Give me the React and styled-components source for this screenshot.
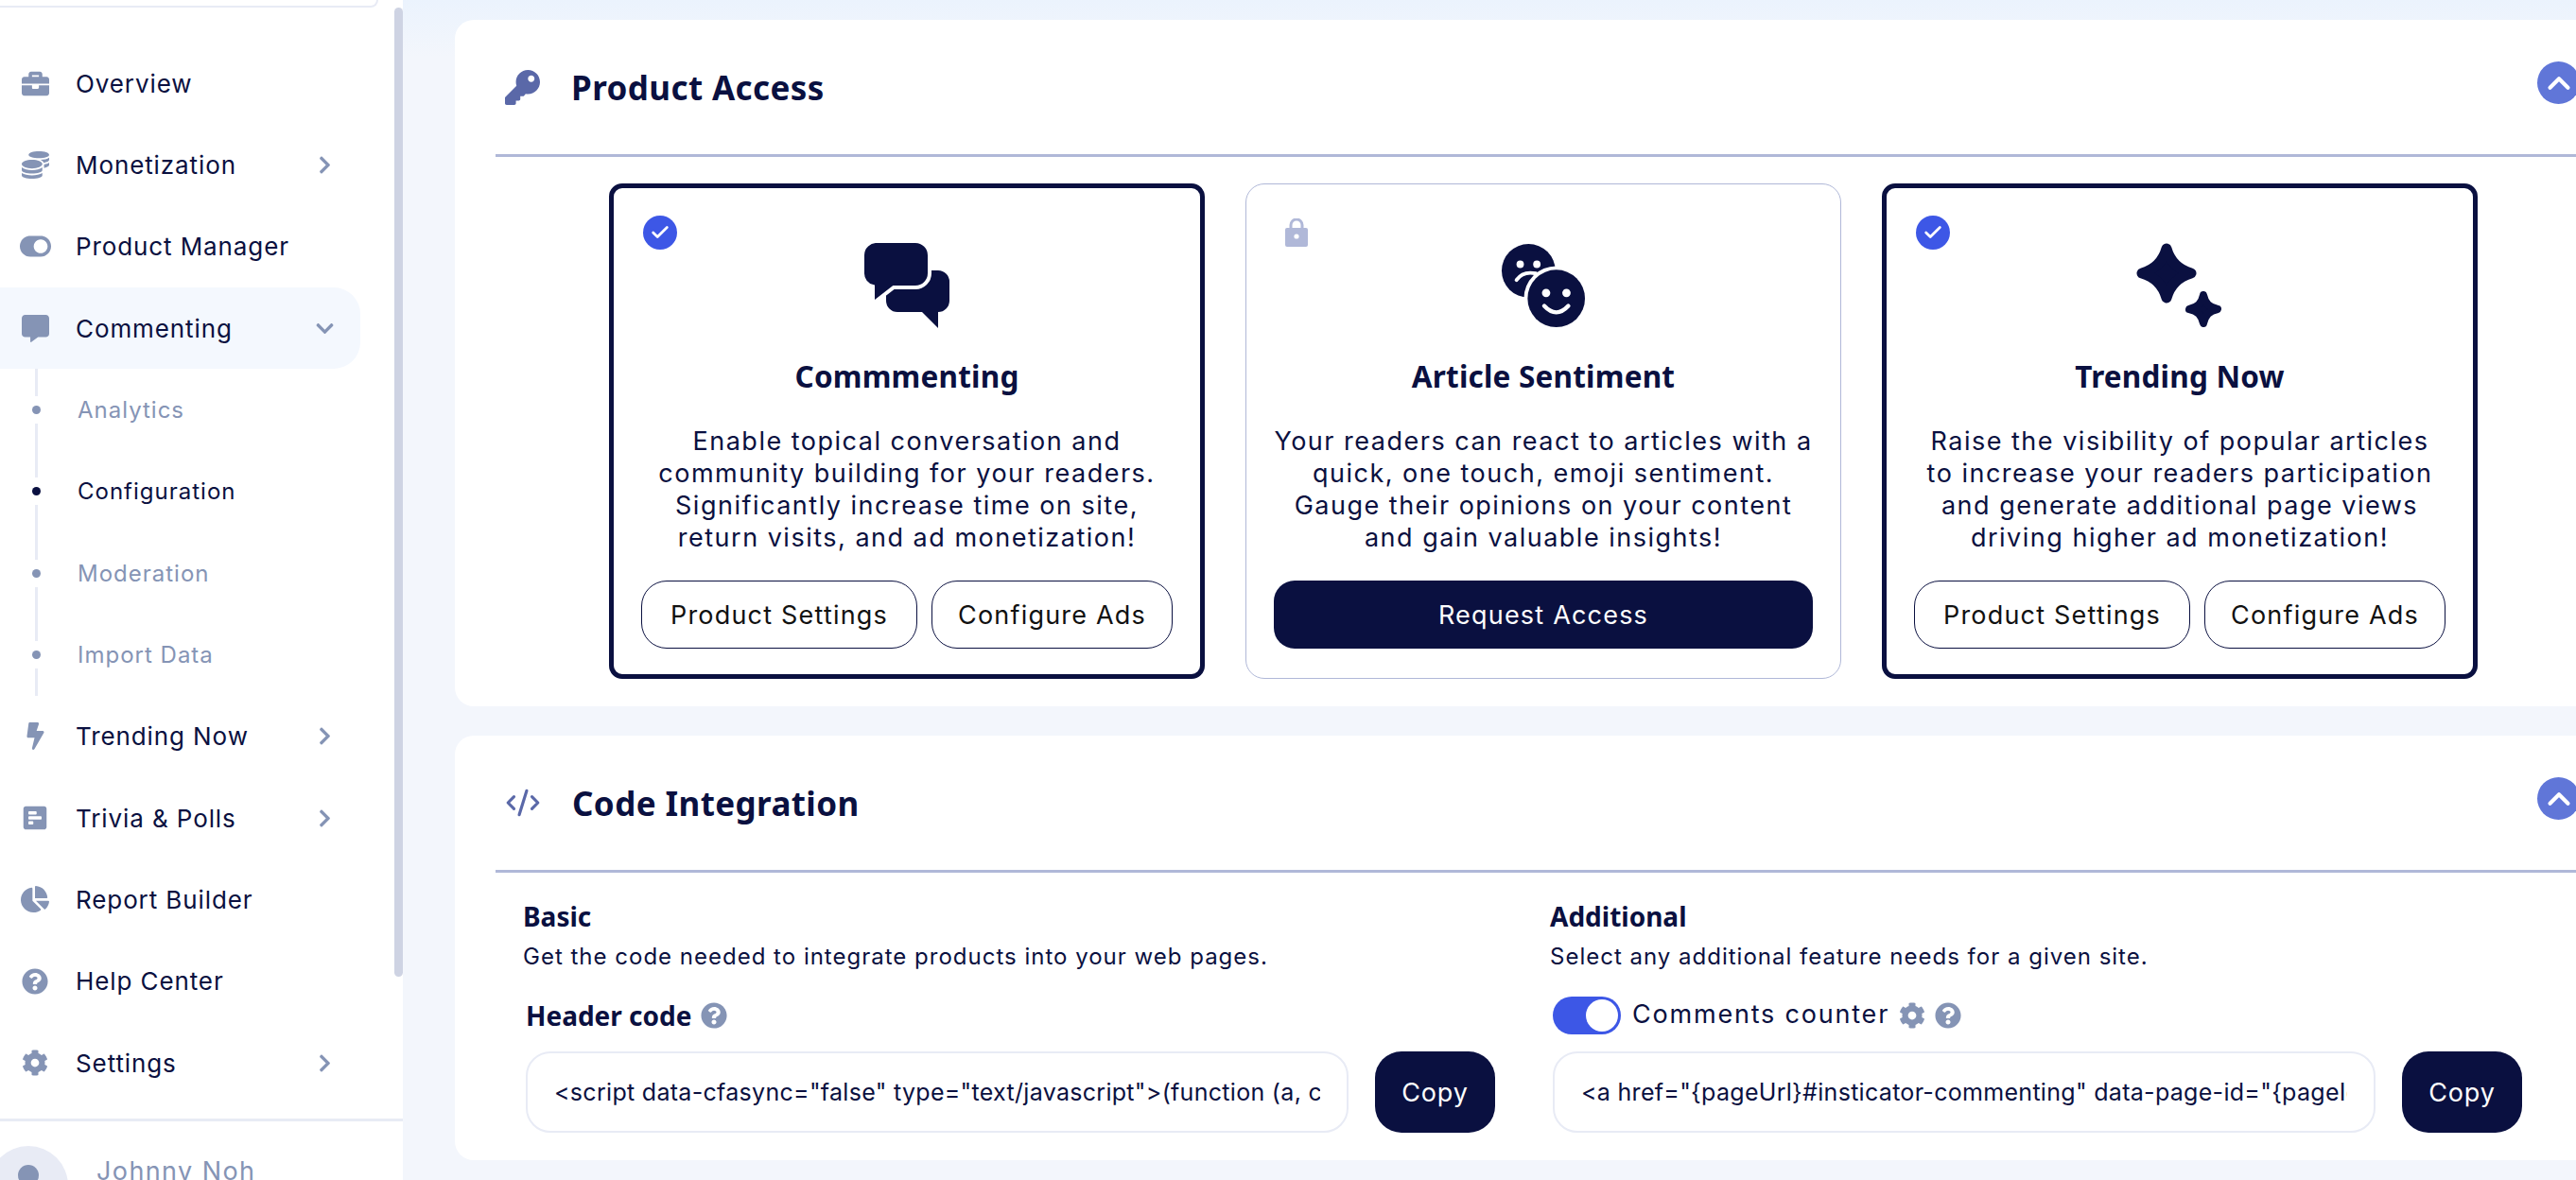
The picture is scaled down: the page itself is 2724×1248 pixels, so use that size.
import React from "react";
import styled, { createGlobalStyle } from "styled-components";
import {
  FaBolt,
  FaBriefcase,
  FaChartPie,
  FaChevronDown,
  FaChevronRight,
  FaCoins,
  FaCog,
  FaCommentAlt,
  FaKey,
  FaPollH,
  FaQuestionCircle,
  FaToggleOn,
} from "react-icons/fa";
import { Check, ChevronUp, CodeXml } from "lucide-react";

const NAVY = "#0a1040";
const SLATE = "#8594b5";
const BLUE = "#3d57e6";
const LINE = "#b0b8d8";
const PALE = "#e8ebf5";
const BODY_FONT = '"Inter", "Liberation Sans", sans-serif';
const HEAD_FONT = '"Noto Sans", "Liberation Sans", sans-serif';

const GlobalStyle = createGlobalStyle`
  html, body {
    margin: 0;
    padding: 0;
    overflow: hidden;
    background: #f3f6fc;
  }
  * {
    box-sizing: border-box;
  }
`;

const Page = styled.div`
  display: flex;
  width: 2724px;
  height: 1248px;
  overflow: hidden;
  font-family: ${BODY_FONT};
  color: ${NAVY};
`;

const Sidebar = styled.aside`
  position: relative;
  flex: 0 0 426px;
  height: 100%;
  overflow: hidden;
  background: #fff;
`;

const Scrollbar = styled.div`
  position: absolute;
  top: 8px;
  right: 0;
  width: 9px;
  height: 1025px;
  border-radius: 5px;
  background: #ced3e3;
`;

const LogoEdge = styled.div`
  width: 400px;
  height: 8px;
  border-bottom: 2px solid ${PALE};
  border-right: 2px solid ${PALE};
  border-bottom-right-radius: 26px;
`;

const Menu = styled.nav`
  display: flex;
  flex-direction: column;
  padding-top: 37px;
`;

const MenuRow = styled.div`
  display: flex;
  align-items: center;
  width: 381px;
  height: 86.33px;
  padding: 0 27px 0 20px;
  border-radius: 0 28px 28px 0;
  background: ${(p) => (p.$active ? "#f4f8fe" : "transparent")};
`;

const MenuIcon = styled.span`
  display: flex;
  justify-content: center;
  flex: 0 0 34px;
  margin-right: 26px;
  color: ${SLATE};
  font-size: ${(p) => p.$size || 29}px;
`;

const MenuLabel = styled.span`
  font-size: 26px;
  font-weight: 430;
  letter-spacing: 0.9px;
  white-space: nowrap;
`;

const MenuArrow = styled.span`
  display: flex;
  margin-left: auto;
  color: ${SLATE};
  font-size: 21px;
`;

const SubRow = styled.div`
  display: flex;
  align-items: center;
  height: 86.33px;
  padding-left: 34px;
`;

const Rail = styled.div`
  display: flex;
  flex-direction: column;
  align-items: center;
  flex: 0 0 9px;
  height: 100%;
  margin-right: 39px;

  &::before,
  &::after {
    content: "";
    flex: 1;
    width: 3px;
    background: ${PALE};
  }
`;

const RailDot = styled.span`
  width: 9px;
  height: 9px;
  margin: 10px 0;
  border-radius: 50%;
  background: ${(p) => (p.$current ? NAVY : SLATE)};
`;

const SubLabel = styled.span`
  font-size: 24px;
  letter-spacing: 1px;
  color: ${(p) => (p.$current ? NAVY : SLATE)};
`;

const SidebarFooter = styled.div`
  display: flex;
  gap: 30px;
  margin-top: 16px;
  margin-left: -12px;
  padding-top: 26px;
  border-top: 3px solid ${PALE};
  width: 438px;
`;

const FooterAvatar = styled.div`
  display: flex;
  justify-content: center;
  flex: 0 0 84px;
  height: 84px;
  padding-top: 20px;
  border-radius: 50%;
  background: ${PALE};

  &::before {
    content: "";
    width: 22px;
    height: 22px;
    border-radius: 50%;
    background: ${SLATE};
  }
`;

const FooterName = styled.span`
  margin-top: 10px;
  font-size: 27px;
  letter-spacing: 1.4px;
  color: ${SLATE};
`;

const Main = styled.main`
  display: flex;
  flex-direction: column;
  flex: 1;
  gap: 31px;
  min-width: 0;
  padding: 21px 0 0 55px;
  overflow: hidden;
  background: linear-gradient(180deg, #ebf3fd 0, #f3f6fc 60px);
`;

const Section = styled.section`
  flex: none;
  width: 2302px;
  padding: 0 43px;
  border-radius: 20px;
  background: #fff;
`;

const SectionHeader = styled.header`
  display: flex;
  align-items: center;
  height: 145px;
  padding: 0 12px 0 10px;
  border-bottom: 3px solid ${LINE};
`;

const SectionIcon = styled.span`
  display: flex;
  justify-content: center;
  flex: 0 0 36px;
  margin-right: 33px;
  color: #5a68a8;
  font-size: 37px;
`;

const SectionTitle = styled.h2`
  margin: 0;
  font-family: ${HEAD_FONT};
  font-size: 35px;
  font-weight: 700;
  letter-spacing: 0.4px;
`;

const CollapseButton = styled.span`
  display: flex;
  align-items: center;
  justify-content: center;
  width: 45px;
  height: 45px;
  margin-left: auto;
  margin-bottom: 9px;
  border-radius: 50%;
  background: #6076d8;
  color: #fff;
`;

const ProductRow = styled.div`
  display: flex;
  justify-content: center;
  gap: 43px;
  padding: 28px 0 29px;
`;

const ProductCard = styled.article`
  position: relative;
  display: flex;
  flex-direction: column;
  align-items: center;
  width: 630px;
  height: 524px;
  padding-top: ${(p) => (p.$selected ? 58 : 62)}px;
  border: ${(p) => (p.$selected ? `5px solid ${NAVY}` : `1px solid ${LINE}`)};
  border-radius: ${(p) => (p.$selected ? 14 : 20)}px;
`;

const CheckBadge = styled.span`
  position: absolute;
  top: 29px;
  left: 31px;
  display: flex;
  align-items: center;
  justify-content: center;
  width: 36px;
  height: 36px;
  border-radius: 50%;
  background: ${BLUE};
  color: #fff;
`;

const LockBadge = styled.svg`
  position: absolute;
  top: 36px;
  left: 41px;
  width: 24px;
  height: 30px;
  color: ${LINE};
`;

const ProductIcon = styled.svg`
  display: block;
  width: 92px;
  height: 90px;
  color: ${NAVY};
`;

const ProductTitle = styled.h3`
  margin: 31px 0 32px;
  font-family: ${HEAD_FONT};
  font-size: 31.5px;
  font-weight: 700;
  letter-spacing: 0.2px;
  line-height: 40px;
`;

const ProductText = styled.p`
  margin: 0;
  font-size: 27px;
  letter-spacing: 1.5px;
  line-height: 34px;
  text-align: center;
  white-space: nowrap;
`;

const ButtonRow = styled.div`
  display: flex;
  justify-content: center;
  gap: 15px;
  margin-top: 28px;
`;

const OutlineButton = styled.button`
  width: ${(p) => p.$width}px;
  height: 72px;
  padding: 0;
  border: 1px solid ${NAVY};
  border-radius: 27px;
  background: #fff;
  color: #111;
  font-family: ${BODY_FONT};
  font-size: 27px;
  letter-spacing: 1.2px;
`;

const SolidButton = styled.button`
  width: 570px;
  height: 72px;
  margin-top: 28px;
  border: 0;
  border-radius: 22px;
  background: ${NAVY};
  color: #fff;
  font-family: ${BODY_FONT};
  font-size: 27px;
  letter-spacing: 1.2px;
`;

const CodeColumns = styled.div`
  display: grid;
  grid-template-columns: 1086px 1fr;
  padding: 31px 0 29px 29px;
`;

const CodeColumn = styled.div`
  display: flex;
  flex-direction: column;
`;

const ColumnTitle = styled.h4`
  margin: 0;
  font-family: ${HEAD_FONT};
  font-size: 28px;
  font-weight: 700;
  line-height: 30px;
`;

const ColumnText = styled.p`
  margin: 13px 0 0;
  font-size: 24px;
  letter-spacing: 1px;
  line-height: 30px;
`;

const FieldLabelRow = styled.div`
  display: flex;
  align-items: center;
  gap: 10px;
  height: 40px;
  margin-top: 27px;
  padding-left: 3px;
`;

const FieldLabel = styled.span`
  font-family: ${HEAD_FONT};
  font-size: 28px;
  font-weight: 700;
`;

const CounterLabel = styled.span`
  margin: 0 0 3px 2px;
  font-size: 27px;
  letter-spacing: 1.8px;
`;

const SmallIcon = styled.span`
  display: flex;
  font-size: 28px;
  color: ${SLATE};
`;

const Toggle = styled.span`
  display: flex;
  justify-content: flex-end;
  width: 72px;
  height: 40px;
  padding: 3px;
  border-radius: 20px;
  background: ${BLUE};

  &::after {
    content: "";
    width: 34px;
    height: 34px;
    border-radius: 50%;
    background: #fff;
  }
`;

const CodeRow = styled.div`
  display: flex;
  gap: 28px;
  margin-top: 18px;
  padding-left: 3px;
`;

const CodeInput = styled.input`
  width: 870px;
  height: 86px;
  padding: 0 28px;
  border: 2px solid ${PALE};
  border-radius: 26px;
  background: #fff;
  color: ${NAVY};
  font-family: ${BODY_FONT};
  font-size: 25px;
  letter-spacing: 0.3px;
  outline: none;
`;

const CopyButton = styled.button`
  width: 127px;
  height: 86px;
  border: 0;
  border-radius: 28px;
  background: ${NAVY};
  color: #fff;
  font-family: ${BODY_FONT};
  font-size: 27px;
  letter-spacing: 0.8px;
`;

const BubblesIcon = () => (
  <ProductIcon viewBox="0 0 92 90">
    <path
      fill="currentColor"
      d="M36 29h43a12 12 0 0 1 12 12v20a12 12 0 0 1-12 12v17L62 73H36a12 12 0 0 1-12-12V41a12 12 0 0 1 12-12z"
    />
    <path
      fill="currentColor"
      stroke="#fff"
      strokeWidth="4"
      d="M15 -2h40a15 15 0 0 1 15 15v19a15 15 0 0 1-15 15H32L10 64V46A14 14 0 0 1-1 32V13A15 15 0 0 1 15-2z"
    />
  </ProductIcon>
);

const FacesIcon = () => (
  <ProductIcon viewBox="0 0 92 92">
    <circle cx="30" cy="30" r="29" fill="currentColor" />
    <circle cx="21" cy="23" r="4" fill="#fff" />
    <circle cx="39" cy="23" r="4" fill="#fff" />
    <path d="M17 40Q24 30 38 33" fill="none" stroke="#fff" strokeWidth="4" strokeLinecap="round" />
    <circle cx="60" cy="60" r="35" fill="#fff" />
    <circle cx="60" cy="60" r="31" fill="currentColor" />
    <circle cx="49" cy="54" r="4.5" fill="#fff" />
    <circle cx="71" cy="54" r="4.5" fill="#fff" />
    <path d="M47 68Q60 82 73 68" fill="none" stroke="#fff" strokeWidth="4.5" strokeLinecap="round" />
  </ProductIcon>
);

const SparklesIcon = () => (
  <ProductIcon viewBox="0 0 92 90">
    <path
      fill="currentColor"
      stroke="currentColor"
      strokeWidth="11"
      strokeLinejoin="round"
      d="M32 6C36 20 44 28 58 32C44 36 36 44 32 58C28 44 20 36 6 32C20 28 28 20 32 6Z"
    />
    <path
      fill="currentColor"
      stroke="currentColor"
      strokeWidth="8"
      strokeLinejoin="round"
      d="M71 55C73 64 77 68 86 70C77 72 73 76 71 85C69 76 65 72 56 70C65 68 69 64 71 55Z"
    />
  </ProductIcon>
);

const LockIcon = () => (
  <LockBadge viewBox="0 0 24 30">
    <path d="M6 12V7a6 6 0 0 1 12 0v5" fill="none" stroke="currentColor" strokeWidth="3" />
    <rect x="0" y="10" width="24" height="20" rx="2" fill="currentColor" />
    <circle cx="12" cy="19" r="2.6" fill="#fff" />
  </LockBadge>
);

const navTop = [
  { label: "Overview", icon: <FaBriefcase /> },
  { label: "Monetization", icon: <FaCoins />, arrow: true },
  { label: "Product Manager", icon: <FaToggleOn />, size: 33 },
];

const navSub = [
  { label: "Analytics" },
  { label: "Configuration", current: true },
  { label: "Moderation" },
  { label: "Import Data" },
];

const navBottom = [
  { label: "Trending Now", icon: <FaBolt />, arrow: true },
  { label: "Trivia & Polls", icon: <FaPollH />, arrow: true, size: 28 },
  { label: "Report Builder", icon: <FaChartPie />, size: 30 },
  { label: "Help Center", icon: <FaQuestionCircle />, size: 28 },
  { label: "Settings", icon: <FaCog />, arrow: true, size: 28 },
];

const NavItem = ({ item }) => (
  <MenuRow>
    <MenuIcon $size={item.size}>{item.icon}</MenuIcon>
    <MenuLabel>{item.label}</MenuLabel>
    {item.arrow && (
      <MenuArrow>
        <FaChevronRight />
      </MenuArrow>
    )}
  </MenuRow>
);

const CardText = ({ lines }) => (
  <ProductText>
    {lines.map((line) => (
      <React.Fragment key={line}>
        {line}
        <br />
      </React.Fragment>
    ))}
  </ProductText>
);

const SettingsButtons = () => (
  <ButtonRow>
    <OutlineButton $width={292}>Product Settings</OutlineButton>
    <OutlineButton $width={255}>Configure Ads</OutlineButton>
  </ButtonRow>
);

const App = () => {
  return (
    <Page>
      <GlobalStyle />
      <Sidebar>
        <LogoEdge />
        <Menu>
          {navTop.map((item) => (
            <NavItem key={item.label} item={item} />
          ))}
          <MenuRow $active>
            <MenuIcon>
              <FaCommentAlt />
            </MenuIcon>
            <MenuLabel>Commenting</MenuLabel>
            <MenuArrow>
              <FaChevronDown />
            </MenuArrow>
          </MenuRow>
          {navSub.map((item) => (
            <SubRow key={item.label}>
              <Rail>
                <RailDot $current={item.current} />
              </Rail>
              <SubLabel $current={item.current}>{item.label}</SubLabel>
            </SubRow>
          ))}
          {navBottom.map((item) => (
            <NavItem key={item.label} item={item} />
          ))}
        </Menu>
        <SidebarFooter>
          <FooterAvatar />
          <FooterName>Johnny Noh</FooterName>
        </SidebarFooter>
        <Scrollbar />
      </Sidebar>

      <Main>
        <Section>
          <SectionHeader>
            <SectionIcon>
              <FaKey />
            </SectionIcon>
            <SectionTitle>Product Access</SectionTitle>
            <CollapseButton>
              <ChevronUp size={38} strokeWidth={2.6} />
            </CollapseButton>
          </SectionHeader>
          <ProductRow>
            <ProductCard $selected>
              <CheckBadge>
                <Check size={22} strokeWidth={3} />
              </CheckBadge>
              <BubblesIcon />
              <ProductTitle>Commmenting</ProductTitle>
              <CardText
                lines={[
                  "Enable topical conversation and",
                  "community building for your readers.",
                  "Significantly increase time on site,",
                  "return visits, and ad monetization!",
                ]}
              />
              <SettingsButtons />
            </ProductCard>
            <ProductCard>
              <LockIcon />
              <FacesIcon />
              <ProductTitle>Article Sentiment</ProductTitle>
              <CardText
                lines={[
                  "Your readers can react to articles with a",
                  "quick, one touch, emoji sentiment.",
                  "Gauge their opinions on your content",
                  "and gain valuable insights!",
                ]}
              />
              <SolidButton>Request Access</SolidButton>
            </ProductCard>
            <ProductCard $selected>
              <CheckBadge>
                <Check size={22} strokeWidth={3} />
              </CheckBadge>
              <SparklesIcon />
              <ProductTitle>Trending Now</ProductTitle>
              <CardText
                lines={[
                  "Raise the visibility of popular articles",
                  "to increase your readers participation",
                  "and generate additional page views",
                  "driving higher ad monetization!",
                ]}
              />
              <SettingsButtons />
            </ProductCard>
          </ProductRow>
        </Section>

        <Section>
          <SectionHeader>
            <SectionIcon>
              <CodeXml size={38} strokeWidth={2} />
            </SectionIcon>
            <SectionTitle>Code Integration</SectionTitle>
            <CollapseButton>
              <ChevronUp size={38} strokeWidth={2.6} />
            </CollapseButton>
          </SectionHeader>
          <CodeColumns>
            <CodeColumn>
              <ColumnTitle>Basic</ColumnTitle>
              <ColumnText>Get the code needed to integrate products into your web pages.</ColumnText>
              <FieldLabelRow>
                <FieldLabel>Header code</FieldLabel>
                <SmallIcon>
                  <FaQuestionCircle />
                </SmallIcon>
              </FieldLabelRow>
              <CodeRow>
                <CodeInput
                  readOnly
                  value={'<script data-cfasync="false" type="text/javascript">(function (a, c, s, u){ "Insticator" in a'}
                />
                <CopyButton>Copy</CopyButton>
              </CodeRow>
            </CodeColumn>
            <CodeColumn>
              <ColumnTitle>Additional</ColumnTitle>
              <ColumnText>Select any additional feature needs for a given site.</ColumnText>
              <FieldLabelRow>
                <Toggle />
                <CounterLabel>Comments counter</CounterLabel>
                <SmallIcon>
                  <FaCog />
                </SmallIcon>
                <SmallIcon>
                  <FaQuestionCircle />
                </SmallIcon>
              </FieldLabelRow>
              <CodeRow>
                <CodeInput
                  readOnly
                  value={'<a href="{pageUrl}#insticator-commenting" data-page-id="{pageId}"></a>'}
                />
                <CopyButton>Copy</CopyButton>
              </CodeRow>
            </CodeColumn>
          </CodeColumns>
        </Section>
      </Main>
    </Page>
  );
};

export default App;
